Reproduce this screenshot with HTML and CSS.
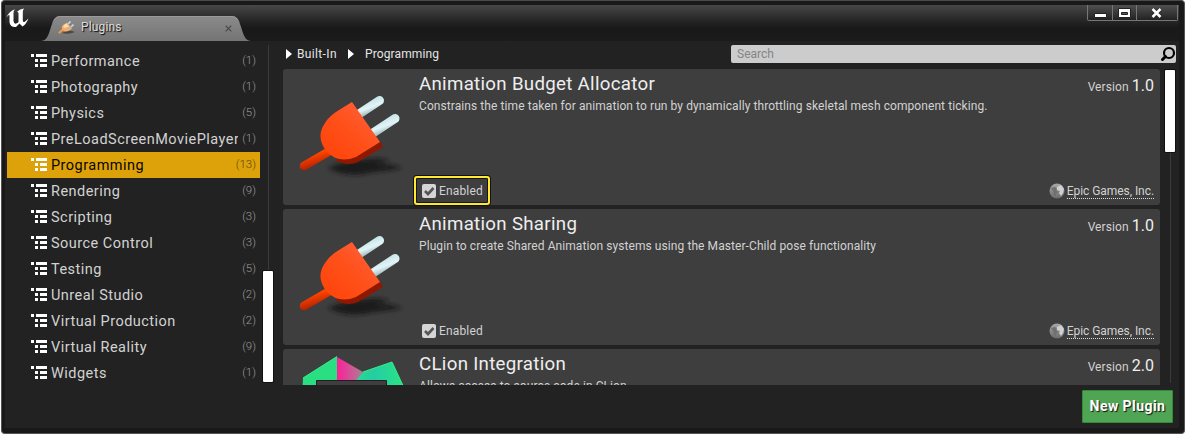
FILE: index.html
```html
<!DOCTYPE html>
<html lang="en">
<head>
<meta charset="utf-8">
<title>Plugins</title>
<link rel="stylesheet" href="styles.css">
</head>
<body>
<svg width="0" height="0" class="defs" aria-hidden="true">
  <defs>
    <linearGradient id="body" x1="0" y1="1" x2="1" y2="0"><stop offset="0" stop-color="#ff4208"/><stop offset=".5" stop-color="#ff501a"/><stop offset="1" stop-color="#ff6544"/></linearGradient>
    <linearGradient id="prong" x1="0.3" y1="0.2" x2=".7" y2=".9"><stop offset="0" stop-color="#cbe6ea"/><stop offset=".45" stop-color="#e2f5f8"/><stop offset="1" stop-color="#93abaf"/></linearGradient>
    <linearGradient id="cord" x1="0" y1="0" x2=".5" y2="1"><stop offset=".3" stop-color="#ff4300"/><stop offset="1" stop-color="#b82400"/></linearGradient>
    <linearGradient id="pink" x1="0" x2="1"><stop offset="0" stop-color="#ff1e99"/><stop offset="1" stop-color="#a78293"/></linearGradient>
    <linearGradient id="teal" x1="0" x2="1"><stop offset="0" stop-color="#2bdc88"/><stop offset=".4" stop-color="#24cda4"/><stop offset="1" stop-color="#2be581"/></linearGradient>
    <linearGradient id="tabfill" x1="0" y1="0" x2="0" y2="1"><stop offset="0" stop-color="#8b8b8b"/><stop offset="1" stop-color="#747474"/></linearGradient>
    <linearGradient id="globe" x1="0" y1="0" x2="0" y2="1"><stop offset="0" stop-color="#a8a8a8"/><stop offset="1" stop-color="#6c6c6c"/></linearGradient>
    <filter id="soft" x="-20%" y="-60%" width="140%" height="220%"><feGaussianBlur stdDeviation="2.2"/></filter>
    <symbol id="list" viewBox="0 0 16 14"><path fill="#fff" d="M0 0h3v3H0zM5 0h11v3H5zM4 5h3v3H4zM9 5h7v3H9zM4 10h3v3H4zM9 10h7v3H9z"/></symbol>
    <symbol id="plug" viewBox="0 0 120 100">
      <path d="M38 88Q55 80 81 79Q96 78 99 81L85 84Q104 84 112 88Q96 91 84 92Q58 99 38 88Z" fill="#141414" opacity=".85" filter="url(#soft)"/>
      <path d="M14 86L38 72" stroke="url(#cord)" stroke-width="8.5" stroke-linecap="round"/>
      <path d="M66 36L89.500 20.500" stroke="url(#prong)" stroke-width="9" stroke-linecap="round"/>
      <path d="M80 55L105 38.500" stroke="url(#prong)" stroke-width="9" stroke-linecap="round"/>
      <path d="M90 61L93 67L68 82Q57 87 45 80L62 76Z" fill="#8f1800"/>
      <path d="M62 22L90 62L66 77Q49 84 37 72Q25 57 35 43Q39 36 49 30Z" fill="url(#body)"/>
    </symbol>
    <symbol id="world" viewBox="0 0 16 16"><circle cx="8" cy="8" r="7.500" fill="url(#globe)"/><path d="M8 4L12 2L15 6L14 10L12 13L10 10L11 8L8 7Z" fill="#d0d0d0"/><path d="M2 5L6 4L8 6L7 7L9 9L7 11L7 14L5 12L4 8Z" fill="#707070"/></symbol>
  </defs>
</svg>
<div class="window">
  <header class="titlebar">
    <svg class="logo" viewBox="0 0 24 20"><path fill="#fff" d="M.5 9.500Q3 3 9 1.200Q7.300 3 7.500 5V13Q8 16 10 15.600Q11.500 15 12.500 14V5.500Q12.500 4 11 3.800Q14 1 18 .5Q16.800 2 16.800 4V12.500Q17 14.500 18.500 14L22.500 10.500Q20 16.500 16.500 18.500L13.500 15.500L10 19Q4 19.500 3.500 14V8Q3.500 5.500 .5 9.500Z"/></svg>
    <div class="tab">
      <svg class="tab-shape" viewBox="0 0 210 25"><path d="M0 25C7 25 8 16 11 8Q13 0 19 0H191Q197 0 199 8C202 16 203 25 210 25Z" fill="url(#tabfill)"/><path d="M13 4Q15 .5 19 .5H191Q195 .5 197 4" fill="none" stroke="#9b9b9b"/></svg>
      <svg class="tab-icon" viewBox="0 0 17 15"><path d="M4 13Q10 9 17 12Q11 15 4 13Z" fill="#333" opacity=".7"/><path d="M1.500 12.500L5 9.500" stroke="#f29b3c" stroke-width="2.200" stroke-linecap="round"/><path d="M10 4L12.500 1.500M13 7L15.500 4.500" stroke="#b7d9fa" stroke-width="1.700"/><path d="M9 2.500L14 8.500Q9 13 6 11Q2 8 5 5Z" fill="#efae70"/><path d="M8.500 3.500L11 6.500L6 8Q5 6 6 5Z" fill="#ffdbb0"/></svg>
      <span class="tab-label">Plugins</span>
      <svg class="tab-close" viewBox="0 0 7 7"><path d="M.7.7L6.300 6.300M6.300.7L.7 6.300" stroke="#484848" stroke-width="1.200"/></svg>
    </div>
    <div class="controls">
      <span class="ctl ctl-min"><svg viewBox="0 0 13 10"><path d="M.5 5.500h12v4H.5z" fill="#fff" stroke="#222"/></svg></span>
      <span class="ctl ctl-max"><svg viewBox="0 0 13 10"><path d="M.5.500h12v9H.5z" fill="#fff" stroke="#222"/><path d="M3.500 4.500h6v2H3.500z" fill="#555" stroke="#222"/></svg></span>
      <span class="ctl ctl-close"><svg viewBox="0 0 13 10"><path d="M2.500 1L10.500 9M10.500 1L2.500 9" stroke="#222" stroke-width="4"/><path d="M2.500 1L10.500 9M10.500 1L2.500 9" stroke="#fff" stroke-width="2.600"/></svg></span>
    </div>
  </header>
  <div class="content">
    <nav class="sidebar">
      <ul class="categories">
        <li class="category"><svg class="list"><use href="#list"/></svg><span class="name">Performance</span><span class="count">(1)</span></li>
        <li class="category"><svg class="list"><use href="#list"/></svg><span class="name">Photography</span><span class="count">(1)</span></li>
        <li class="category"><svg class="list"><use href="#list"/></svg><span class="name">Physics</span><span class="count">(5)</span></li>
        <li class="category"><svg class="list"><use href="#list"/></svg><span class="name">PreLoadScreenMoviePlayer</span><span class="count">(1)</span></li>
        <li class="category selected"><svg class="list"><use href="#list"/></svg><span class="name">Programming</span><span class="count">(13)</span></li>
        <li class="category"><svg class="list"><use href="#list"/></svg><span class="name">Rendering</span><span class="count">(9)</span></li>
        <li class="category"><svg class="list"><use href="#list"/></svg><span class="name">Scripting</span><span class="count">(3)</span></li>
        <li class="category"><svg class="list"><use href="#list"/></svg><span class="name">Source Control</span><span class="count">(3)</span></li>
        <li class="category"><svg class="list"><use href="#list"/></svg><span class="name">Testing</span><span class="count">(5)</span></li>
        <li class="category"><svg class="list"><use href="#list"/></svg><span class="name">Unreal Studio</span><span class="count">(2)</span></li>
        <li class="category"><svg class="list"><use href="#list"/></svg><span class="name">Virtual Production</span><span class="count">(2)</span></li>
        <li class="category"><svg class="list"><use href="#list"/></svg><span class="name">Virtual Reality</span><span class="count">(9)</span></li>
        <li class="category"><svg class="list"><use href="#list"/></svg><span class="name">Widgets</span><span class="count">(1)</span></li>
      </ul>
      <div class="scroll scroll-side"><div class="thumb"></div></div>
    </nav>
    <main class="main">
      <div class="toolbar">
        <div class="crumbs"><i class="arrow"></i><span class="crumb-root">Built-In</span><i class="arrow"></i><span class="crumb-leaf">Programming</span></div>
        <div class="search"><span>Search</span><svg class="lens" viewBox="0 0 16 16"><circle cx="9" cy="7" r="5" fill="none" stroke="#000" stroke-width="2.200"/><path d="M5.500 10.500L2.500 13.500" stroke="#000" stroke-width="3" stroke-linecap="round"/></svg></div>
      </div>
      <div class="results">
        <div class="cards">
          <article class="card">
            <svg class="art"><use href="#plug"/></svg>
            <div class="info"><h2>Animation Budget Allocator</h2><p>Constrains the time taken for animation to run by dynamically throttling skeletal mesh component ticking.</p>
              <div class="enabled highlighted"><span class="check"><svg viewBox="0 0 14 14"><path d="M3 7L6 10L11.500 4" fill="none" stroke="#555" stroke-width="2.600"/></svg></span><span class="enabled-label">Enabled</span></div></div>
            <div class="meta"><div class="version">Version <b>1.0</b></div><div class="author"><svg class="world"><use href="#world"/></svg><span>Epic Games, Inc.</span></div></div>
          </article>
          <article class="card">
            <svg class="art"><use href="#plug"/></svg>
            <div class="info"><h2>Animation Sharing</h2><p>Plugin to create Shared Animation systems using the Master-Child pose functionality</p>
              <div class="enabled"><span class="check"><svg viewBox="0 0 14 14"><path d="M3 7L6 10L11.500 4" fill="none" stroke="#555" stroke-width="2.600"/></svg></span><span class="enabled-label">Enabled</span></div></div>
            <div class="meta"><div class="version">Version <b>1.0</b></div><div class="author"><svg class="world"><use href="#world"/></svg><span>Epic Games, Inc.</span></div></div>
          </article>
          <article class="card">
            <svg class="art" viewBox="0 0 120 100"><path d="M12 51L13 31L47 9.500V45H12Z" fill="#29df82"/><path d="M47 10L73 25L66 45H47Z" fill="url(#pink)"/><path d="M62 38L73 25L102 15L116 45H62Z" fill="url(#teal)"/><path d="M13 31L47 9.500M73 25L102 15L116 45" stroke="#31f28b" fill="none"/><path d="M26.500 33.500H96.500V60H26.500Z" fill="#3e3e3e" stroke="#2a1a26"/></svg>
            <div class="info"><h2>CLion Integration</h2><p>Allows access to source code in CLion.</p></div>
            <div class="meta"><div class="version">Version <b>2.0</b></div></div>
          </article>
        </div>
        <div class="scroll scroll-main"><div class="thumb"></div></div>
      </div>
    </main>
  </div>
  <footer class="footer"><button class="new">New Plugin</button></footer>
</div>
</body>
</html>
```
FILE: styles.css
```css
* { box-sizing: border-box; }
body { margin: 0; background: #fff; font-family: Roboto, sans-serif; font-size: 12px; color: #d2d2d2; overflow: hidden; }
.defs { position: absolute; }
.window { width: 1184px; height: 434px; margin-left: 1px; border: 1px solid #555; border-top-color: #454c4b; border-radius: 4px; background: #191919; display: flex; flex-direction: column; padding: 4px 5px 5px 3px; overflow: hidden; }
.titlebar { height: 36px; flex: none; display: flex; background: linear-gradient(#474747, #292929 14px, #191919 23px, #1b1b1b); }
.logo { width: 24px; height: 20px; margin: 3px 0 0 1px; }
.tab { width: 210px; height: 25px; margin: 11px 0 0 11px; position: relative; display: flex; align-items: flex-start; }
.tab-shape { position: absolute; width: 210px; height: 25px; left: 0; top: 0; }
.tab-icon { width: 17px; height: 15px; position: relative; margin: 4px 0 0 17px; }
.tab-label { position: relative; margin: 2px 0 0 6px; line-height: 18px; font-size: 12px; letter-spacing: .15px; color: #ddd; text-shadow: 1px 1px 1px #000; }
.tab-close { position: relative; width: 7px; height: 7px; margin: 9px 19px 0 auto; }
.controls { display: flex; margin: 0 1px 0 auto; height: 16px; border: 1px solid #777; border-top: 0; border-radius: 0 0 2px 2px; background: linear-gradient(#505050, #222); }
.ctl { display: flex; justify-content: center; align-items: center; border-left: 1px solid #777; width: 24px; }
.ctl-min { border-left: 0; }
.ctl-close { width: 41px; }
.ctl svg { width: 13px; height: 10px; margin-top: 1px; }
.ctl-close svg { margin-right: 2px; margin-top: 0; }
.content { height: 344px; flex: none; display: flex; background: #222; }
.sidebar { width: 278px; flex: none; display: flex; padding: 7px 0 0 2px; }
.categories { list-style: none; margin: 0; padding: 0; width: 253px; }
.category { height: 26px; display: flex; align-items: center; padding: 0 4px 0 24px; }
.list { width: 16px; height: 14px; flex: none; margin-right: 4px; }
.name { font-size: 14.500px; letter-spacing: .47px; white-space: nowrap; overflow: hidden; width: 187px; flex: none; line-height: 20px; padding-top: 2px; }
.count { margin-left: -10px; flex: 1; text-align: right; color: #9a9a9a; font-size: 11.500px; font-weight: 300; line-height: 16px; position: relative; top: -1px; }
.selected { background: #dda20a; color: #090600; }
.selected .count { color: #5c4304; }
.scroll { width: 10px; background: linear-gradient(#3b3b3b, #3b3b3b) 5px 0 / 1px 100% no-repeat; }
.scroll .thumb { background: #fff; border-radius: 1px; box-shadow: 0 0 0 1px #111; }
.scroll-side { margin: -3px 0 2px 3px; padding-top: 226px; }
.scroll-side .thumb { height: 111px; }
.main { flex: 1; display: flex; flex-direction: column; }
.toolbar { height: 28px; flex: none; display: flex; align-items: flex-start; }
.crumbs { display: flex; align-items: center; width: 448px; height: 18px; margin-top: 4px; padding-left: 3px; color: #e5e5e5; letter-spacing: .12px; }
.arrow { width: 0; height: 0; border: 5px solid transparent; border-left: 6px solid #fff; border-right: 0; }
.crumb-root { margin-left: 5px; width: 51px; letter-spacing: .35px; }
.crumb-leaf { margin-left: 11px; }
.search { width: 445px; height: 18px; margin-top: 4px; padding-left: 6px; border-radius: 2px; background: #ccc; color: #858585; display: flex; align-items: center; justify-content: space-between; }
.lens { width: 16px; height: 16px; }
.results { display: flex; height: 316px; overflow: hidden; }
.cards { width: 877px; display: flex; flex-direction: column; gap: 4px; }
.card { height: 136px; flex: none; border-radius: 3px; background: #3e3e3e; display: flex; }
.art { width: 120px; height: 100px; margin: 11px 0 0 7px; flex: none; overflow: hidden; }
.card:nth-child(3) .art { margin-top: -2px; }
.info { flex: 1; padding: 3px 0 0 9px; display: flex; flex-direction: column; align-items: flex-start; }
.info h2 { margin: 0; font-size: 18.700px; line-height: 24px; font-weight: 400; color: #eee; letter-spacing: .3px; white-space: nowrap; }
.info p { margin: 2px 0 0; line-height: 17px; white-space: nowrap; letter-spacing: .08px; }
.enabled { height: 29px; width: 76px; display: flex; align-items: center; gap: 3px; margin: auto 0 0 -5px; padding: 0 0 0 7px; border: 1px solid transparent; }
.enabled-label { padding-top: 1px; letter-spacing: .15px; }
.highlighted { border: 2px solid #fee832; padding-left: 6px; border-radius: 3px; box-shadow: 0 0 0 1px #111, inset 0 0 0 1px #151515; }
.check { width: 14px; height: 14px; border-radius: 2px; background: #d5d5d5; }
.check svg { display: block; width: 14px; height: 14px; }
.meta { display: flex; flex-direction: column; justify-content: space-between; align-items: flex-end; padding: 7px 6px 6px 0; }
.version { line-height: 20px; white-space: nowrap; letter-spacing: .1px; }
.version b { font-size: 16px; font-weight: 400; color: #eee; letter-spacing: 0; }
.author { display: flex; align-items: center; gap: 2px; }
.author span { border-bottom: 1px dotted #ddd; line-height: 15px; height: 15px; white-space: nowrap; letter-spacing: -.06px; }
.world { width: 16px; height: 16px; }
.scroll-main { margin: 1px 0 2px 5px; }
.scroll-main .thumb { height: 82px; }
.footer { flex: 1; background: #222; display: flex; justify-content: flex-end; padding: 5px 6px 0 0; }
.new { width: 91px; height: 33px; padding: 0 0 2px; border: 1px solid #338b3a; border-radius: 1px; background: #50a555; color: #fff; font: bold 14px Roboto, sans-serif; text-shadow: 1px 1px 1px #111; letter-spacing: .45px; }
```
